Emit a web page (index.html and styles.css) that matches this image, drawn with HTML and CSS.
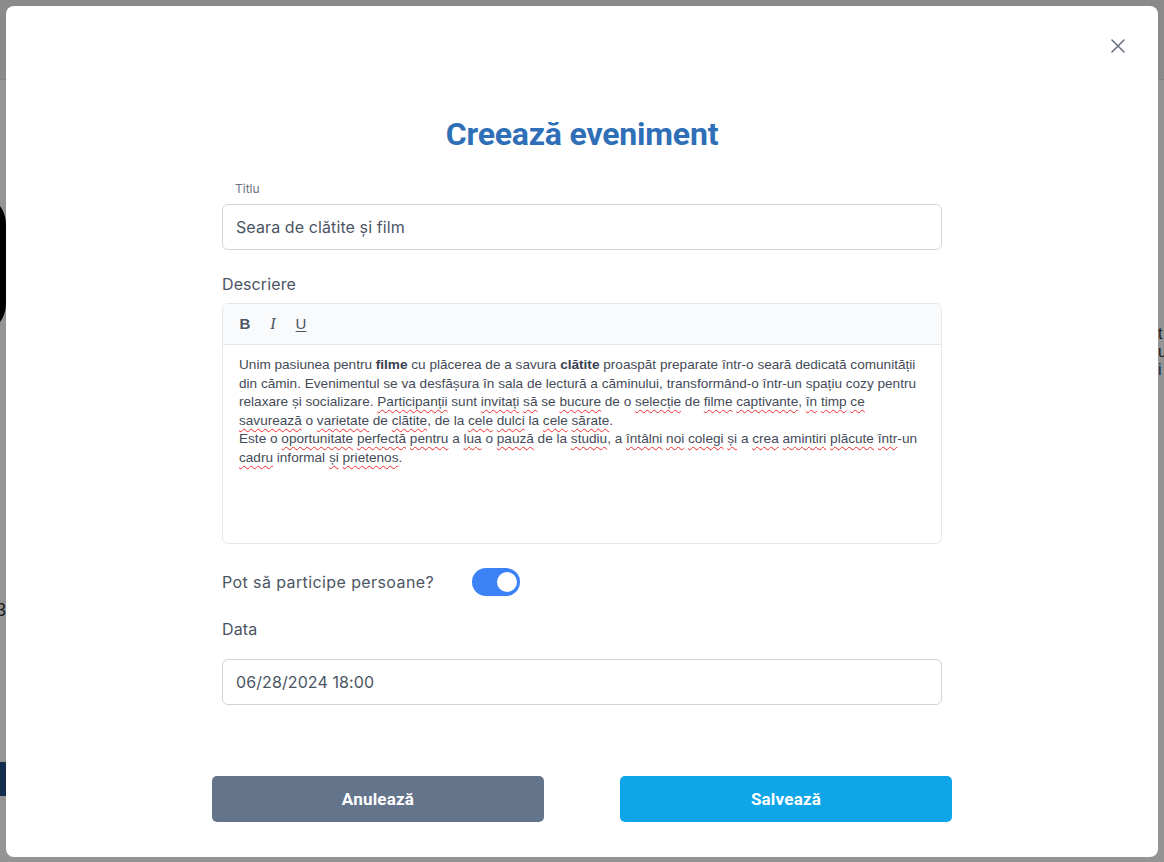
FILE: index.html
```html
<!DOCTYPE html>
<html lang="ro">
<head>
<meta charset="utf-8">
<title>Creează eveniment</title>
<link rel="stylesheet" href="styles.css">
</head>
<body>
<div class="page">
  <header class="page-header"></header>
  <div class="page-body">
    <div class="avatar"></div>
    <div class="left-frag link-frag">i</div>
    <div class="left-frag num-frag">3</div>
    <div class="left-frag btn-frag">i</div>
    <div class="right-frags">
      <span>t</span><span>u</span><span class="blue">i</span>
    </div>
  </div>
</div>

<div class="overlay">
  <div class="modal" role="dialog" aria-labelledby="modal-title">
    <button class="close" aria-label="Închide">
      <svg width="14" height="14" viewBox="0 0 14 14"><path d="M1 1 L13 13 M13 1 L1 13" stroke="#6b7280" stroke-width="1.6" stroke-linecap="round"/></svg>
    </button>
    <h1 id="modal-title" class="title">Creează eveniment</h1>

    <form class="form">
      <label class="small-label">Titlu</label>
      <div class="input">Seara de clătite și film</div>

      <label class="label label-desc">Descriere</label>
      <div class="editor">
        <div class="toolbar">
          <span class="tb tb-b">B</span>
          <span class="tb tb-i">I</span>
          <span class="tb tb-u">U</span>
        </div>
        <div class="content">
          <p>Unim pasiunea pentru <b>filme</b> cu plăcerea de a savura <b>clătite</b> proaspăt preparate într-o seară dedicată comunității din cămin. Evenimentul se va desfășura în sala de lectură a căminului, transformând-o într-un spațiu cozy pentru relaxare și socializare. <span class="sp">Participanții</span> sunt <span class="sp">invitați</span> <span class="sp">să</span> se <span class="sp">bucure</span> de o <span class="sp">selecție</span> de <span class="sp">filme</span> <span class="sp">captivante</span>, <span class="sp">în</span> <span class="sp">timp</span> <span class="sp">ce</span> <span class="sp">savurează</span> o <span class="sp">varietate</span> de <span class="sp">clătite</span>, de la <span class="sp">cele</span> <span class="sp">dulci</span> la <span class="sp">cele</span> <span class="sp">sărate</span>.</p>
          <p>Este o <span class="sp">oportunitate</span> <span class="sp">perfectă</span> <span class="sp">pentru</span> a <span class="sp">lua</span> o <span class="sp">pauză</span> de la <span class="sp">studiu</span>, a <span class="sp">întâlni</span> <span class="sp">noi</span> <span class="sp">colegi</span> <span class="sp">și</span> a <span class="sp">crea</span> <span class="sp">amintiri</span> <span class="sp">plăcute</span> <span class="sp">într</span>-un <span class="sp">cadru</span> informal <span class="sp">și</span> <span class="sp">prietenos</span>.</p>
        </div>
      </div>

      <div class="toggle-row">
        <span class="label label-toggle">Pot să participe persoane?</span>
        <span class="toggle on"><span class="knob"></span></span>
      </div>

      <label class="label label-date">Data</label>
      <div class="input">06/28/2024 18:00</div>
    </form>

    <div class="actions">
      <button class="btn btn-cancel">Anulează</button>
      <button class="btn btn-save">Salvează</button>
    </div>
  </div>
</div>
</body>
</html>
```

FILE: styles.css
```css
* { box-sizing: border-box; }

html, body {
  margin: 0;
  padding: 0;
  height: 100%;
}

body {
  background: #ffffff;
  font-family: "Inter", "Noto Sans", sans-serif;
  overflow: hidden;
}

/* background page (under the dim overlay) */
.page {
  height: 862px;
  display: flex;
  flex-direction: column;
}

.page-header {
  height: 80px;
  background: #eeeeee;
  border-bottom: 1px solid #dcdcdc;
  flex: none;
}

.page-body {
  flex: 1;
  position: relative;
  background: #ffffff;
}

.avatar {
  position: absolute;
  left: -200px;
  top: 114px;
  width: 206px;
  height: 140px;
  border-radius: 30px;
  background: #000;
}

.left-frag {
  position: absolute;
  left: -4px;
  font-family: "Liberation Sans", Arial, sans-serif;
  font-size: 16px;
  color: #1e4a80;
}
.link-frag { top: 446px; font-weight: bold; }
.num-frag { top: 520px; color: #333; font-size: 18px; }
.btn-frag {
  top: 682px;
  left: -30px;
  width: 36px;
  height: 34px;
  background: #1f4f86;
  color: #fff;
  padding: 7px 0 0 26px;
}

.right-frags {
  position: absolute;
  left: 1158px;
  top: 245px;
  display: flex;
  flex-direction: column;
  font-family: "Liberation Sans", Arial, sans-serif;
  font-size: 16px;
  line-height: 18px;
  color: #333;
}
.right-frags .blue { color: #1e4a80; }

.overlay {
  position: fixed;
  inset: 0;
  background: rgba(0, 0, 0, 0.42);
  padding: 6px;
}

/* modal */
.modal {
  position: relative;
  width: 1152px;
  height: 851px;
  background: #ffffff;
  border-radius: 8px;
  padding: 108px 0 0;
  display: flex;
  flex-direction: column;
  align-items: center;
}

.close {
  position: absolute;
  top: 27px;
  right: 27px;
  width: 26px;
  height: 26px;
  border: 0;
  background: transparent;
  padding: 6px;
  display: flex;
  align-items: center;
  justify-content: center;
  cursor: pointer;
}

.title {
  margin: 0;
  font-family: "Roboto", "Liberation Sans", sans-serif;
  font-weight: 700;
  font-size: 32px;
  line-height: 40px;
  color: #2f6fb7;
  letter-spacing: -0.2px;
}

.form {
  width: 720px;
  display: flex;
  flex-direction: column;
  margin-top: 27px;
}

.small-label {
  font-size: 12px;
  line-height: 16px;
  color: #6b7280;
  margin-left: 13px;
  margin-bottom: 7px;
}

.label {
  font-size: 16px;
  line-height: 24px;
  color: #4b5563;
  letter-spacing: 0.1px;
}

.label-toggle {
  letter-spacing: 0.4px;
}

.input {
  height: 46px;
  border: 1px solid #d1d5db;
  border-radius: 6px;
  padding: 0 13px;
  display: flex;
  align-items: center;
  font-size: 16px;
  color: #4b5563;
  letter-spacing: 0.1px;
}

.label-desc {
  margin-top: 22px;
  margin-bottom: 7px;
}

.editor {
  border: 1px solid #e5e7eb;
  border-radius: 6px;
  overflow: hidden;
}

.toolbar {
  height: 41px;
  background: #f9fafb;
  border-bottom: 1px solid #e5e7eb;
  display: flex;
  align-items: center;
  gap: 16px;
  padding-left: 16px;
}

.tb {
  width: 12px;
  text-align: center;
  color: #4b5563;
  font-size: 15px;
  line-height: 18px;
}
.tb-b { font-family: "Liberation Sans", Arial, sans-serif; font-weight: bold; }
.tb-i { font-family: "Liberation Serif", serif; font-style: italic; font-size: 16px; }
.tb-u { font-family: "Liberation Sans", Arial, sans-serif; text-decoration: underline; text-underline-offset: 2px; }

.content {
  min-height: 198px;
  padding: 11px 16px 12px;
  font-family: "Liberation Sans", Arial, sans-serif;
  font-size: 13.6px;
  line-height: 18.6px;
  color: #444b57;
}

.content p { margin: 0; }
.content b { color: #374151; }

.sp {
  text-decoration: underline wavy #ef2b2b;
  text-decoration-thickness: 1px;
  text-underline-offset: 3px;
}

.toggle-row {
  margin-top: 24px;
  height: 28px;
  display: flex;
  align-items: center;
  gap: 38px;
}

.toggle {
  width: 48px;
  height: 28px;
  border-radius: 14px;
  background: #3b82f6;
  display: flex;
  align-items: center;
  justify-content: flex-end;
  padding-right: 3px;
}

.knob {
  width: 20px;
  height: 20px;
  border-radius: 50%;
  background: #ffffff;
}

.label-date {
  margin-top: 21px;
  margin-bottom: 18px;
}

.actions {
  margin-top: 71px;
  width: 740px;
  display: flex;
  justify-content: space-between;
}

.btn {
  width: 332px;
  height: 46px;
  border: 0;
  border-radius: 5px;
  color: #ffffff;
  font-family: "Roboto", "Liberation Sans", sans-serif;
  font-weight: 700;
  font-size: 17px;
  letter-spacing: 0.2px;
  cursor: pointer;
}

.btn-cancel { background: #64748b; }
.btn-save { background: #0ea5e9; }
```
